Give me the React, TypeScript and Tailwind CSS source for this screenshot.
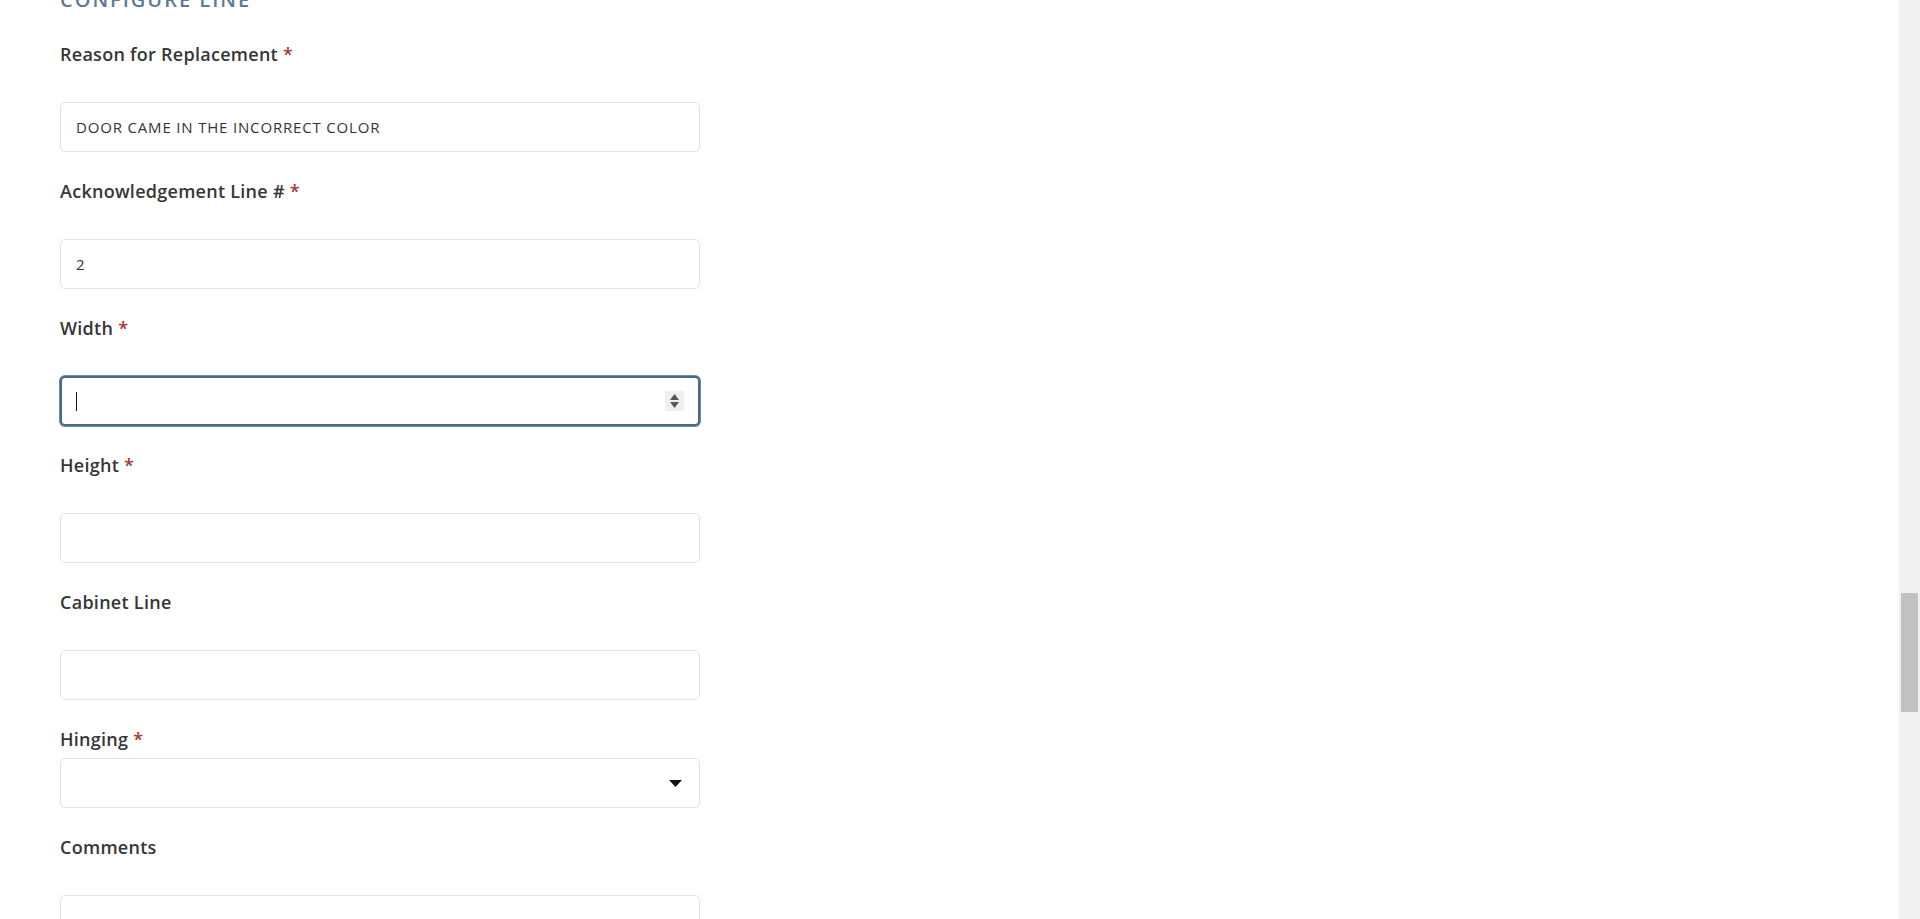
import React from "react";

const labelCls =
  "block h-[24px] leading-[24px] text-[18px] font-semibold text-[#363636] tracking-[0.015em]";
const inputCls =
  "w-full h-[50px] rounded-[5px] border border-[#e3e3e3] bg-white px-[15px] text-[15px] font-normal text-[#333333] tracking-[0.055em] outline-none";

function Label({ text, required }: { text: string; required?: boolean }) {
  return (
    <label className={labelCls} style={{ fontFamily: '"Open Sans", sans-serif' }}>
      {text}
      {required && <span className="ml-[5px] text-[#a3392c]">*</span>}
    </label>
  );
}

export default function App() {
  const font = { fontFamily: '"Open Sans", sans-serif' };
  return (
    <div className="h-[919px] w-full flex overflow-hidden bg-white" style={font}>
      <main className="flex-1 pl-[60px]">
        <div className="w-[640px] -mt-[14px]">
          <h2 className="h-[28px] leading-[28px] text-[20px] font-semibold uppercase tracking-[0.1em] text-[#5a7b97] mb-[28px]">
            Configure Line
          </h2>

          <Label text="Reason for Replacement" required />
          <div className="mt-[36px] mb-[27px]">
            <input
              className={inputCls}
              style={font}
              readOnly
              value="DOOR CAME IN THE INCORRECT COLOR"
            />
          </div>

          <Label text="Acknowledgement Line #" required />
          <div className="mt-[36px] mb-[27px]">
            <input className={inputCls} style={font} readOnly value="2" />
          </div>

          <Label text="Width" required />
          <div className="mt-[36px] mb-[27px]">
            <div className="w-full h-[50px] rounded-[5px] border-2 border-[#4b6987] ring-1 ring-[#6f8aa3] bg-white flex items-center pl-[14px] pr-[14px]">
              <span className="block w-px h-[19px] bg-[#111111]" />
              <div className="flex-1" />
              <div className="w-[19px] h-[20px] bg-[#efefef] flex flex-col items-center justify-center gap-[2px]">
                <svg width="9" height="6" viewBox="0 0 9 6">
                  <path d="M4.5 0 L9 6 L0 6 Z" fill="#555555" />
                </svg>
                <svg width="9" height="6" viewBox="0 0 9 6">
                  <path d="M0 0 L9 0 L4.5 6 Z" fill="#555555" />
                </svg>
              </div>
            </div>
          </div>

          <Label text="Height" required />
          <div className="mt-[36px] mb-[27px]">
            <input className={inputCls} style={font} readOnly value="" />
          </div>

          <Label text="Cabinet Line" />
          <div className="mt-[36px] mb-[27px]">
            <input className={inputCls} style={font} readOnly value="" />
          </div>

          <Label text="Hinging" required />
          <div className="mt-[7px] mb-[27px]">
            <div className="w-full h-[50px] rounded-[5px] border border-[#e3e3e3] bg-white flex items-center justify-end pr-[17px]">
              <svg width="13" height="7" viewBox="0 0 13 7">
                <path d="M0 0 L13 0 L6.5 7 Z" fill="#111111" />
              </svg>
            </div>
          </div>

          <Label text="Comments" />
          <div className="mt-[36px]">
            <textarea
              className="w-full h-[120px] rounded-[5px] border border-[#e3e3e3] bg-white resize-none outline-none"
              readOnly
            />
          </div>
        </div>
      </main>

      <div className="w-[21px] h-full bg-[#f1f1f1] flex flex-col">
        <div className="h-[593px]" />
        <div className="h-[119px] mx-[2px] bg-[#c1c1c1]" />
      </div>
    </div>
  );
}
